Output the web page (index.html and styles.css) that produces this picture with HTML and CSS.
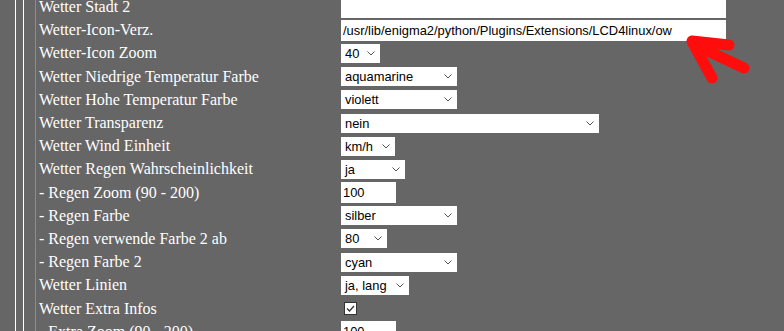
FILE: index.html
```html
<!DOCTYPE html>
<html lang="de">
<head>
  <meta charset="UTF-8">
  <title>LCD4linux Wetter</title>
  <link rel="stylesheet" href="styles.css">
</head>
<body>
  <div class="frame">
    <div class="frame-inner">
      <div class="form">
        <label>Wetter Stadt 2</label>
        <input class="text wide" type="text" value="">

        <label>Wetter-Icon-Verz.</label>
        <input class="text wide" type="text" value="/usr/lib/enigma2/python/Plugins/Extensions/LCD4linux/ow">

        <label>Wetter-Icon Zoom</label>
        <div class="select w-40"><span>40</span><svg width="8" height="5" viewBox="0 0 8 5"><path d="M0.5 0.5 L4 4 L7.5 0.5"/></svg></div>

        <label>Wetter Niedrige Temperatur Farbe</label>
        <div class="select w-116"><span>aquamarine</span><svg width="8" height="5" viewBox="0 0 8 5"><path d="M0.5 0.5 L4 4 L7.5 0.5"/></svg></div>

        <label>Wetter Hohe Temperatur Farbe</label>
        <div class="select w-116"><span>violett</span><svg width="8" height="5" viewBox="0 0 8 5"><path d="M0.5 0.5 L4 4 L7.5 0.5"/></svg></div>

        <label>Wetter Transparenz</label>
        <div class="select w-258"><span>nein</span><svg width="8" height="5" viewBox="0 0 8 5"><path d="M0.5 0.5 L4 4 L7.5 0.5"/></svg></div>

        <label>Wetter Wind Einheit</label>
        <div class="select w-54"><span>km/h</span><svg width="8" height="5" viewBox="0 0 8 5"><path d="M0.5 0.5 L4 4 L7.5 0.5"/></svg></div>

        <label>Wetter Regen Wahrscheinlichkeit</label>
        <div class="select w-64"><span>ja</span><svg width="8" height="5" viewBox="0 0 8 5"><path d="M0.5 0.5 L4 4 L7.5 0.5"/></svg></div>

        <label>- Regen Zoom (90 - 200)</label>
        <input class="text small" type="text" value="100">

        <label>- Regen Farbe</label>
        <div class="select w-116"><span>silber</span><svg width="8" height="5" viewBox="0 0 8 5"><path d="M0.5 0.5 L4 4 L7.5 0.5"/></svg></div>

        <label>- Regen verwende Farbe 2 ab</label>
        <div class="select w-46"><span>80</span><svg width="8" height="5" viewBox="0 0 8 5"><path d="M0.5 0.5 L4 4 L7.5 0.5"/></svg></div>

        <label>- Regen Farbe 2</label>
        <div class="select w-116"><span>cyan</span><svg width="8" height="5" viewBox="0 0 8 5"><path d="M0.5 0.5 L4 4 L7.5 0.5"/></svg></div>

        <label>Wetter Linien</label>
        <div class="select w-68"><span>ja, lang</span><svg width="8" height="5" viewBox="0 0 8 5"><path d="M0.5 0.5 L4 4 L7.5 0.5"/></svg></div>

        <label>Wetter Extra Infos</label>
        <span class="check"><svg width="11" height="11" viewBox="0 0 11 11"><path d="M2 5.5 L4.5 8 L9 3"/></svg></span>

        <label>- Extra Zoom (90 - 200)</label>
        <input class="text small" type="text" value="100">
      </div>
    </div>
  </div>

  <!-- roter Pfeil auf das Icon-Verzeichnis -->
  <svg class="arrow" width="80" height="60" viewBox="680 28 80 60">
    <path d="M729 45 L692 41 M693 44 L744 68 M695 47 L712 78"/>
  </svg>
</body>
</html>
```

FILE: styles.css
```css
* {
  box-sizing: border-box;
}

html, body {
  height: 100%;
}

body {
  margin: 0;
  overflow: hidden;
  background-color: #666;
  font-family: 'Liberation Serif', 'Times New Roman', serif;
}

.frame {
  margin-left: 15px;
  min-height: 100%;
  border-left: 1px solid #fff;
  padding-left: 7px;
}

.frame-inner {
  min-height: 100vh;
  border-left: 1px solid #fff;
  padding-left: 11px;
}

.form {
  min-height: 100vh;
  border-left: 1px solid #8c8c8c;
  padding-left: 3px;
  display: grid;
  grid-template-columns: 302px auto;
  grid-auto-rows: 23.2px;
  align-items: center;
  justify-items: start;
  margin-top: -4.5px;
}

.form label {
  color: #fff;
  font-size: 16px;
  white-space: nowrap;
}

.text {
  height: 21px;
  border: none;
  padding: 0 2px;
  background: #fff;
  color: #000;
  font-family: 'Liberation Sans', Arial, sans-serif;
  font-size: 12.9px;
  outline: none;
}

.text.wide {
  width: 385px;
}

.text.small {
  width: 55px;
}

.select {
  height: 19px;
  background: #fff;
  display: flex;
  align-items: center;
  justify-content: space-between;
  padding: 0 5px 0 4px;
  font-family: 'Liberation Sans', Arial, sans-serif;
  font-size: 12.9px;
  color: #000;
}

.select svg path {
  fill: none;
  stroke: #555;
  stroke-width: 1;
}

.w-40 { width: 39px; }
.w-46 { width: 46px; }
.w-54 { width: 54px; }
.w-64 { width: 64px; }
.w-68 { width: 68px; }
.w-116 { width: 116px; }
.w-258 { width: 258px; }

.check {
  width: 13px;
  height: 13px;
  margin-left: 3px;
  background: #fff;
  border: 1px solid #333;
  display: flex;
  align-items: center;
  justify-content: center;
}

.check svg path {
  fill: none;
  stroke: #333;
  stroke-width: 1.3;
}

.arrow {
  position: absolute;
  left: 680px;
  top: 28px;
}

.arrow path {
  fill: none;
  stroke: #ff0d0d;
  stroke-width: 11;
  stroke-linecap: round;
  stroke-linejoin: round;
}
```
